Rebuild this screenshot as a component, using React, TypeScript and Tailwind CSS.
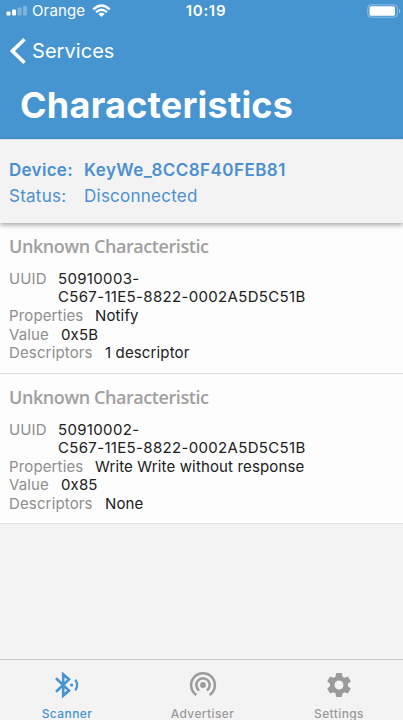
import { MdSettings } from "react-icons/md";

type Characteristic = {
  uuid: string;
  properties: string;
  value: string;
  descriptors: string;
};

const characteristics: Characteristic[] = [
  { uuid: "50910003-", properties: "Notify", value: "0x5B", descriptors: "1 descriptor" },
  { uuid: "50910002-", properties: "Write Write without response", value: "0x85", descriptors: "None" },
];

function StatusBar() {
  return (
    <div className="grid h-[22px] grid-cols-3 items-center pl-1.5">
      <div className="flex items-center">
        <svg width="22" height="10" viewBox="0 0 22 10" fill="white">
          <rect x="0.5" y="5.5" width="4" height="4" rx="1" />
          <rect x="6" y="3.5" width="4" height="6" rx="1" />
          <rect x="11.5" y="1.5" width="4" height="8" rx="1" opacity="0.3" />
          <rect x="17" y="0" width="4" height="9.5" rx="1" opacity="0.3" />
        </svg>
        <span className="ml-1 text-[15px] leading-5 tracking-[0.15px]">Orange</span>
        <svg className="ml-[7px]" width="19" height="14" viewBox="0 0 19 14" fill="none" stroke="white">
          <path d="M1.2 5.4Q9.5 -2.4 17.8 5.4" strokeWidth="2.2" />
          <path d="M4 8.3Q9.5 3.2 15 8.3" strokeWidth="2.2" />
          <path d="M9.5 13L6.4 10Q9.5 7.5 12.6 10Z" fill="white" stroke="none" />
        </svg>
      </div>
      <div className="pl-[3px] text-center text-[15px] leading-5 font-semibold tracking-[0.7px]">10:19</div>
      <div className="flex justify-end pr-px">
        <svg width="35" height="14" viewBox="0 0 35 14" fill="none">
          <rect x="0.8" y="0.8" width="29.5" height="12.4" rx="3.2" stroke="white" strokeOpacity="0.4" />
          <rect x="2.5" y="2.3" width="25.5" height="9.4" rx="1.5" fill="white" />
          <path d="M32 4.7Q34.5 6.8 32 9.3Z" fill="white" fillOpacity="0.5" />
        </svg>
      </div>
    </div>
  );
}

function Card({ item }: { item: Characteristic }) {
  return (
    <section className="h-[150.5px] border-b border-[#dfdfe0] bg-[#fdfdfd] pt-[12px] pl-[9px] text-[15px] whitespace-nowrap text-[#202020]">
      <h2 className="h-[23px] font-['Open_Sans',sans-serif] text-[18px] leading-[23px] font-semibold tracking-[-0.42px] text-[#a0a0a0]">
        Unknown Characteristic
      </h2>
      <dl className="pt-[12px] leading-[18.5px] tracking-[0.14px]">
        <div className="flex h-[37px] leading-[18px]">
          <dt className="w-[49px] text-[#8e8e8e]">UUID</dt>
          <dd className="tracking-[0.33px]">
            {item.uuid}
            <br />
            C567-11E5-8822-0002A5D5C51B
          </dd>
        </div>
        <div className="flex">
          <dt className="w-[86px] text-[#8e8e8e]">Properties</dt>
          <dd>{item.properties}</dd>
        </div>
        <div className="flex">
          <dt className="w-[52px] text-[#8e8e8e]">Value</dt>
          <dd>{item.value}</dd>
        </div>
        <div className="flex">
          <dt className="w-[96px] text-[#8e8e8e]">Descriptors</dt>
          <dd>{item.descriptors}</dd>
        </div>
      </dl>
    </section>
  );
}

function ScannerIcon() {
  return (
    <svg width="28" height="28" viewBox="0 0 28 28" fill="none" stroke="currentColor">
      <path d="M3 7.3L16 19.6L10.2 24.6V3.4L16 8.4L3 20.7" strokeWidth="2.6" />
      <circle cx="18.6" cy="14" r="1.6" fill="currentColor" stroke="none" />
      <path d="M22.4 8.6Q25.8 14 22.4 19.4" strokeWidth="2.2" />
    </svg>
  );
}

function AdvertiserIcon() {
  return (
    <svg width="28" height="28" viewBox="0 0 28 28" fill="none" stroke="currentColor" strokeWidth="2.5">
      <circle cx="14" cy="14" r="2.9" fill="currentColor" stroke="none" />
      <path d="M10.1 19.4A6.7 6.7 0 1 1 17.9 19.4" />
      <path d="M7.4 24A11.9 11.9 0 1 1 20.6 24" />
    </svg>
  );
}

function SettingsIcon() {
  return <MdSettings size={30} />;
}

const tabs = [
  { label: "Scanner", Icon: ScannerIcon, color: "text-[#4694d0]" },
  { label: "Advertiser", Icon: AdvertiserIcon, color: "text-[#9a9a9a]" },
  { label: "Settings", Icon: SettingsIcon, color: "text-[#9a9a9a]" },
];

export default function App() {
  return (
    <div className="flex h-[720px] w-[403px] flex-col overflow-hidden bg-[#f3f3f3] font-['Inter',sans-serif]">
      <header className="h-[139px] shrink-0 bg-[#4695d0] text-white">
        <StatusBar />
        <div className="flex h-[58px] items-center pl-[9px]">
          <svg width="18" height="28" viewBox="0 0 18 28" fill="none" stroke="white" strokeWidth="3.6">
            <path d="M15.5 2.2L3.4 14L15.5 25.8" />
          </svg>
          <span className="ml-[5px] text-[20px] leading-7 tracking-[0.05px]">Services</span>
        </div>
        <h1 className="pl-5 text-[36px] leading-[51px] font-bold tracking-[0.24px]">Characteristics</h1>
      </header>
      <section className="relative z-10 h-[84px] shrink-0 border-t border-[#d9e1ec] bg-[#f3f3f3] pt-[17px] pl-[9px] text-[17px] leading-[26px] whitespace-nowrap text-[#4b8fd0] shadow-[0_2px_5px_rgba(0,0,0,0.35)]">
        <div className="flex font-semibold tracking-[0.45px]">
          <span className="w-[75px] tracking-[0.3px]">Device:</span>
          <span>KeyWe_8CC8F40FEB81</span>
        </div>
        <div className="flex tracking-[0.25px]">
          <span className="w-[75px]">Status:</span>
          <span>Disconnected</span>
        </div>
      </section>
      <main className="flex-1">
        {characteristics.map((item) => (
          <Card key={item.uuid} item={item} />
        ))}
      </main>
      <nav className="grid h-[61px] shrink-0 grid-cols-[134px_137px_136px] border-t border-[#c9c9c9]">
        {tabs.map(({ label, Icon, color }) => (
          <div key={label} className={`flex flex-col items-center pt-[11px] ${color}`}>
            <span className="flex h-7 items-center">
              <Icon />
            </span>
            <span className="mt-[7px] text-[12px] leading-4 font-medium tracking-[0.4px]">{label}</span>
          </div>
        ))}
      </nav>
    </div>
  );
}
